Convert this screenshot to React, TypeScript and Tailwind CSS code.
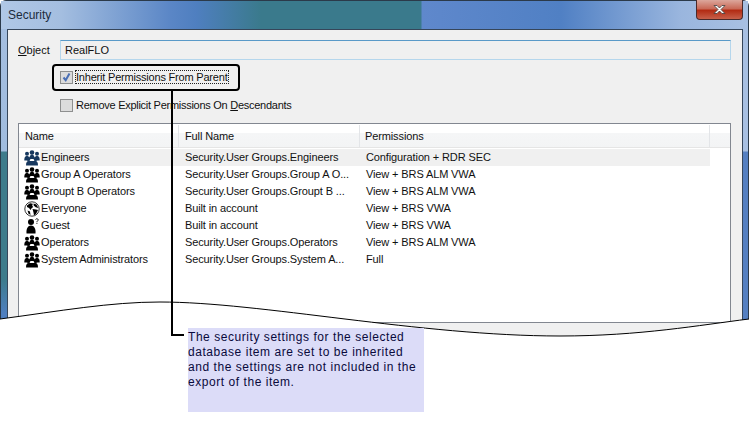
import React from "react";

type IconKind = "group" | "groupBlue" | "world" | "guest";

const rows: { icon: IconKind; name: string; full: string; perm: string }[] = [
  { icon: "groupBlue", name: "Engineers", full: "Security.User Groups.Engineers", perm: "Configuration + RDR SEC" },
  { icon: "group", name: "Group A Operators", full: "Security.User Groups.Group A O...", perm: "View + BRS ALM VWA" },
  { icon: "group", name: "Groupt B Operators", full: "Security.User Groups.Groupt B ...", perm: "View + BRS ALM VWA" },
  { icon: "world", name: "Everyone", full: "Built in account", perm: "View + BRS VWA" },
  { icon: "guest", name: "Guest", full: "Built in account", perm: "View + BRS VWA" },
  { icon: "group", name: "Operators", full: "Security.User Groups.Operators", perm: "View + BRS ALM VWA" },
  { icon: "group", name: "System Administrators", full: "Security.User Groups.System A...", perm: "Full" },
];

function GroupIcon({ color }: { color: string }) {
  return (
    <svg width="16" height="16" viewBox="0 0 16 16" fill={color}>
      <circle cx="8" cy="2.5" r="2.300" />
      <circle cx="3" cy="3.800" r="2" />
      <circle cx="13" cy="3.800" r="2" />
      <path d="M0.300 10.500c0-3.500 1-4.500 2.700-4.500s2.700 1 2.700 4.500z" />
      <path d="M10.300 10.500c0-3.500 1-4.500 2.700-4.500s2.700 1 2.700 4.500z" />
      <circle cx="4.500" cy="9" r="1.900" />
      <circle cx="11.500" cy="9" r="1.900" />
      <path d="M5.300 9c0-3 1.200-4.500 2.700-4.500s2.700 1.500 2.700 4.500z" />
      <path d="M2 15.500c0-3 .8-4.500 2.500-4.500h7c1.700 0 2.500 1.500 2.500 4.500z" />
    </svg>
  );
}

function RowIcon({ kind }: { kind: IconKind }) {
  if (kind === "group") return <GroupIcon color="#000000" />;
  if (kind === "groupBlue") return <GroupIcon color="#17385f" />;
  if (kind === "guest") {
    return (
      <svg width="16" height="16" viewBox="0 0 16 16" fill="#000000">
        <circle cx="7" cy="4" r="3" />
        <path d="M2.500 15.500c-.5-5 1.500-8 4.500-8s5 3 4.500 8z" />
        <path d="M11.500 1.500c.5-1 2.500-1 2.700.2.100 1-1.200 1.200-1.300 2.300" fill="none" stroke="#000000" strokeWidth="0.9" />
        <rect x="12.400" y="4.800" width="1" height="1" />
      </svg>
    );
  }
  return (
    <svg width="16" height="16" viewBox="0 0 16 16">
      <circle cx="8" cy="8" r="7.200" fill="#ffffff" stroke="#333333" strokeWidth="1" />
      <path d="M3 4.500l3-2.300 2.800.5-.6 2 1 1.300-1.600 1.200-1 1.800-1.600-2-2-1z" fill="#000000" />
      <path d="M9.500 2.500l3 1 1.800 3.500-2.600-.8-2-1.800z" fill="#000000" />
      <path d="M8.500 8l3.500.5 2 .5-2 4-2 1.500-.5-3z" fill="#000000" />
      <path d="M3.500 9.500l2.500 1 .5 3.500-2-1.500z" fill="#000000" />
    </svg>
  );
}

function Checkbox({ checked }: { checked?: boolean }) {
  return (
    <div className="flex h-[13px] w-[13px] shrink-0 items-center justify-center border border-[#8e8f8f] bg-[#dcdcdc]">
      {checked && (
        <svg width="11" height="11" viewBox="0 0 11 11" fill="none">
          <path d="M2.500 5.500l2.200 2.700 3.800-6.700" stroke="#4a6fb5" strokeWidth="2" />
        </svg>
      )}
    </div>
  );
}

export default function App() {
  return (
    <div
      className="relative h-[422px] w-[749px] overflow-hidden bg-white text-[11px] text-[#111111]"
      style={{ fontFamily: '"Liberation Sans", Arial, sans-serif' }}
    >
      {/* window frame */}
      <div className="h-[345px] rounded-t-[6px] border border-[#2b3a4a]">
        <div className="relative flex h-[28px] items-center bg-[linear-gradient(90deg,#b0c8e6_0px,#a4bee0_60px,#5a86c6_170px,#4f7fc0_195px,#3a7a8c_260px,#3a7a8c_420px,#5f88cc_421px,#5080c4_560px,#9ab6de_680px,#a8c0e2_100%)] pl-[7px] text-[12px] text-[#1c2c3c]">
          <span>Security</span>
          <div className="absolute -top-[1px] right-[5px] flex h-[20px] w-[47px] items-center justify-center rounded-b-[4px] border border-t-0 border-[#4a2a2a] bg-[linear-gradient(180deg,#dca79c_0%,#c96a58_45%,#b32c14_55%,#c7604a_100%)]">
            <svg width="15" height="11" viewBox="0 0 15 11">
              <path d="M2 1.500h3l2.500 2.500 2.500-2.500h3l-4 4 4 4h-3l-2.500-2.500-2.500 2.500h-3l4-4z" fill="#ffffff" stroke="#3c3c3c" strokeWidth="0.8" />
            </svg>
          </div>
        </div>

        <div className="flex h-[316px]">
          <div className="w-[6px] bg-[linear-gradient(180deg,#a4bee0_0px,#a0bcde_122px,#3d7b8b_123px,#3d7b8b_250px,#4f7fc0_285px,#4f7fc0_100%)]" />

          {/* dialog body */}
          <div className="flex-1 border border-[#36465a] bg-[#f0f0f0] pl-[10px] pr-[11px] pt-[10px]">
            <div className="flex h-[20px] items-center">
              <span className="w-[42px] shrink-0">
                <span className="underline">O</span>bject
              </span>
              <div className="flex h-[20px] flex-1 items-center border border-[#b5d6ec] border-t-[#5a9ac8] pl-[4px]">RealFLO</div>
            </div>

            <div className="ml-[42px] mt-[10px] flex h-[14px] items-center gap-[2px] tracking-[-0.2px]">
              <Checkbox checked />
              <span className="border border-dotted border-[#222222] leading-[12px]">Inherit Permissions From Parent</span>
            </div>
            <div className="ml-[42px] mt-[14px] flex h-[14px] items-center gap-[3px] tracking-[-0.27px]">
              <Checkbox />
              <span>
                Remove Explicit Permissions On <span className="underline">D</span>escendants
              </span>
            </div>

            {/* list */}
            <div className="mt-[11px] h-[200px] border border-[#828790] bg-white tracking-[-0.12px]">
              <div className="flex h-[24px] border-b border-[#e5e5e5] bg-[linear-gradient(180deg,#ffffff_0%,#ffffff_40%,#f5f6f7_41%,#f3f4f5_100%)] pt-[1px]">
                <div className="flex w-[160px] items-center border-r border-[#e3e5e8] pl-[6px]">Name</div>
                <div className="flex w-[181px] items-center border-r border-[#e3e5e8] pl-[6px]">Full Name</div>
                <div className="flex w-[350px] items-center border-r border-[#e3e5e8] pl-[5px]">Permissions</div>
              </div>
              <div className="pt-[1px]">
                {rows.map((row, i) => (
                  <div key={row.name} className="flex h-[17px] w-[691px] items-center whitespace-nowrap">
                    <div className="flex w-[160px] items-center pl-[5px]">
                      <RowIcon kind={row.icon} />
                      <span className={`flex h-[17px] flex-1 items-center pl-[1px] ${i === 0 ? "bg-[#f0f0f0]" : ""}`}>{row.name}</span>
                    </div>
                    <div className={`flex h-[17px] w-[181px] items-center pl-[6px] ${i === 0 ? "bg-[#f0f0f0]" : ""}`}>{row.full}</div>
                    <div className={`flex h-[17px] flex-1 items-center pl-[6px] ${i === 0 ? "bg-[#f0f0f0]" : ""}`}>{row.perm}</div>
                  </div>
                ))}
              </div>
            </div>
          </div>

          <div className="w-[5px] bg-[linear-gradient(180deg,#a8c0e2_0px,#a8c0e2_122px,#5580c2_123px,#5580c2_100%)]" />
        </div>
      </div>

      {/* torn bottom edge */}
      <svg className="absolute left-0 top-0" width="749" height="422" viewBox="0 0 749 422">
        <path d="M0 319C60 311 110 302 160 302C260 302 420 336 560 336C640 336 700 325 749 319L749 422L0 422Z" fill="#ffffff" />
        <path d="M0 319C60 311 110 302 160 302C260 302 420 336 560 336C640 336 700 325 749 319" fill="none" stroke="#000000" strokeWidth="1" />
      </svg>

      {/* callout highlight */}
      <div className="absolute left-[52px] top-[64px] h-[27px] w-[188px] rounded-[4px] border-2 border-black" />
      <div className="absolute left-[171px] top-[90px] h-[245px] w-[2px] bg-black" />
      <div className="absolute left-[171px] top-[334px] h-[2px] w-[13px] bg-black" />

      <div className="absolute left-[188px] top-[328px] h-[84px] w-[236px] bg-[#dcdcf8] pt-[2px] text-[12px] leading-[15px] tracking-[0.55px] text-[#0a0a3c]">
        <p>
          The security settings for the selected
          <br />
          database item are set to be inherited
          <br />
          and the settings are not included in the
          <br />
          export of the item.
        </p>
      </div>
    </div>
  );
}
